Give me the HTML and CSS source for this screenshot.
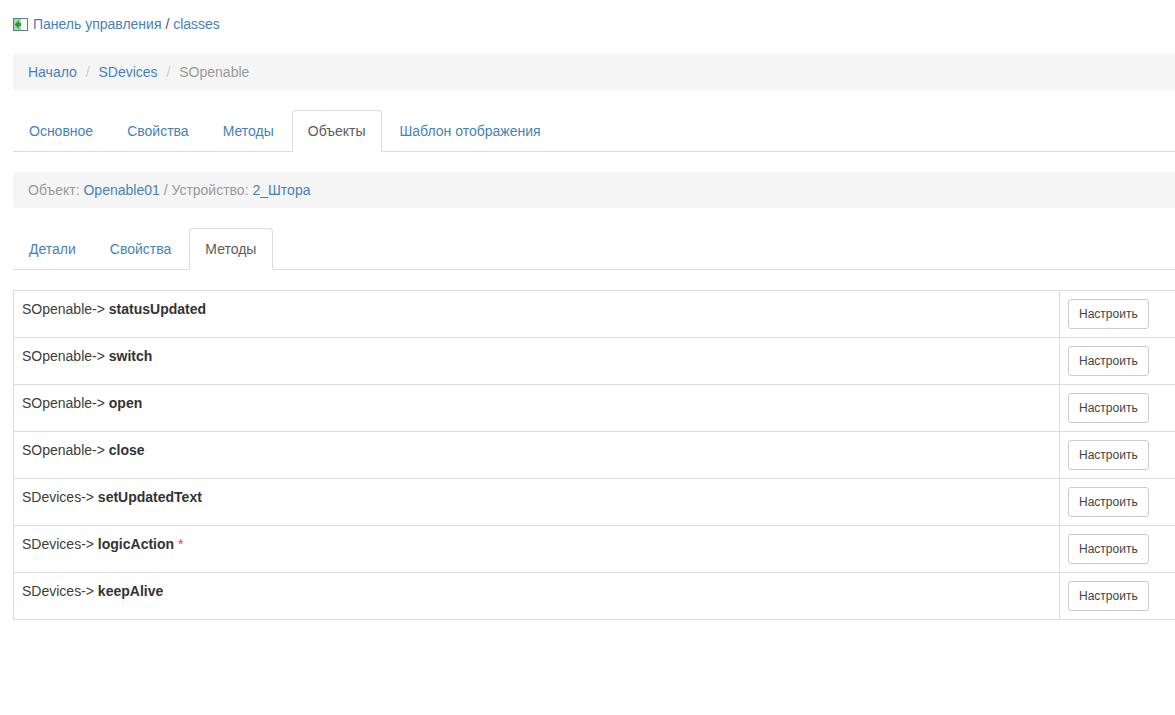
FILE: index.html
```html
<!DOCTYPE html>
<html lang="ru">
<head>
<meta charset="utf-8">
<title>classes</title>
<link rel="stylesheet" href="styles.css">
</head>
<body>
<div class="page">
  <div class="top">
    <svg class="top-icon" width="15" height="13" viewBox="0 0 15 13">
      <rect x="0.5" y="0.5" width="14" height="12" fill="#fff" stroke="#4f8296"/>
      <rect x="1" y="1" width="7" height="11" fill="#a9d6a4"/>
      <path d="M1.5 6.5 6 2V5H8V8H6V11Z" fill="#2a9a3c"/>
    </svg>
    <a href="#">Панель управления</a> <span class="sep">/</span> <a href="#">classes</a>
  </div>
  <ul class="crumbs">
    <li><a href="#">Начало</a></li>
    <li><a href="#">SDevices</a></li>
    <li class="current">SOpenable</li>
  </ul>
  <ul class="tabs">
    <li><a href="#">Основное</a></li>
    <li><a href="#">Свойства</a></li>
    <li><a href="#">Методы</a></li>
    <li class="active"><a href="#">Объекты</a></li>
    <li><a href="#">Шаблон отображения</a></li>
  </ul>
  <div class="crumbs">Объект: <a href="#">Openable01</a> / Устройство: <a href="#">2_Штора</a></div>
  <ul class="tabs tabs-sub">
    <li><a href="#">Детали</a></li>
    <li><a href="#">Свойства</a></li>
    <li class="active"><a href="#">Методы</a></li>
  </ul>
  <table class="methods">
    <tr><td>SOpenable-&gt; <b>statusUpdated</b></td><td class="action"><a class="btn" href="#">Настроить</a></td></tr>
    <tr><td>SOpenable-&gt; <b>switch</b></td><td class="action"><a class="btn" href="#">Настроить</a></td></tr>
    <tr><td>SOpenable-&gt; <b>open</b></td><td class="action"><a class="btn" href="#">Настроить</a></td></tr>
    <tr><td>SOpenable-&gt; <b>close</b></td><td class="action"><a class="btn" href="#">Настроить</a></td></tr>
    <tr><td>SDevices-&gt; <b>setUpdatedText</b></td><td class="action"><a class="btn" href="#">Настроить</a></td></tr>
    <tr><td>SDevices-&gt; <b>logicAction</b> <span class="mark">*</span></td><td class="action"><a class="btn" href="#">Настроить</a></td></tr>
    <tr><td>SDevices-&gt; <b>keepAlive</b></td><td class="action"><a class="btn" href="#">Настроить</a></td></tr>
  </table>
</div>
</body>
</html>
```
FILE: styles.css
```css
* { box-sizing: border-box; }
html, body { margin: 0; overflow-x: hidden; }
body {
  font-family: "Liberation Sans", Arial, sans-serif;
  font-size: 14px;
  line-height: 20px;
  color: #3d3d3d;
  background: #fff;
}
a { color: #4682ba; text-decoration: none; }
b { color: #333; }
.page { width: 1190px; padding: 14px 0 0 13px; }
.top { height: 20px; margin-bottom: 20px; }
.top-icon { vertical-align: -2px; margin-right: 1px; }
.sep { color: #555; }
.crumbs {
  list-style: none;
  margin: 0 0 20px;
  padding: 8px 15px;
  background: #f5f5f5;
  border-radius: 4px;
  color: #999;
}
.crumbs li { display: inline-block; }
.crumbs li + li::before { content: "/\00a0"; padding: 0 5px; color: #ccc; }
.crumbs .current { color: #999; }
.tabs {
  list-style: none;
  display: flex;
  margin: 0 0 20px;
  padding: 0;
  border-bottom: 1px solid #ddd;
}
.tabs li { margin-bottom: -1px; }
.tabs a {
  display: block;
  margin-right: 2px;
  padding: 10px 15px;
  border: 1px solid transparent;
  border-radius: 4px 4px 0 0;
}
.tabs .active a {
  color: #5c5c5c;
  background: #fff;
  border-color: #ddd #ddd #fff;
}
.tabs-sub .active a { min-width: 84px; }
.methods {
  width: 100%;
  border-collapse: collapse;
  border: 1px solid #ddd;
}
.methods td {
  padding: 8px;
  vertical-align: top;
  border: 1px solid #ddd;
}
.methods .action { width: 130px; }
.mark { color: #f33; }
.btn {
  display: inline-block;
  vertical-align: middle;
  padding: 5px 10px;
  font-size: 12px;
  line-height: 18px;
  color: #444;
  background: #fff;
  border: 1px solid #ccc;
  border-radius: 3px;
}
```
